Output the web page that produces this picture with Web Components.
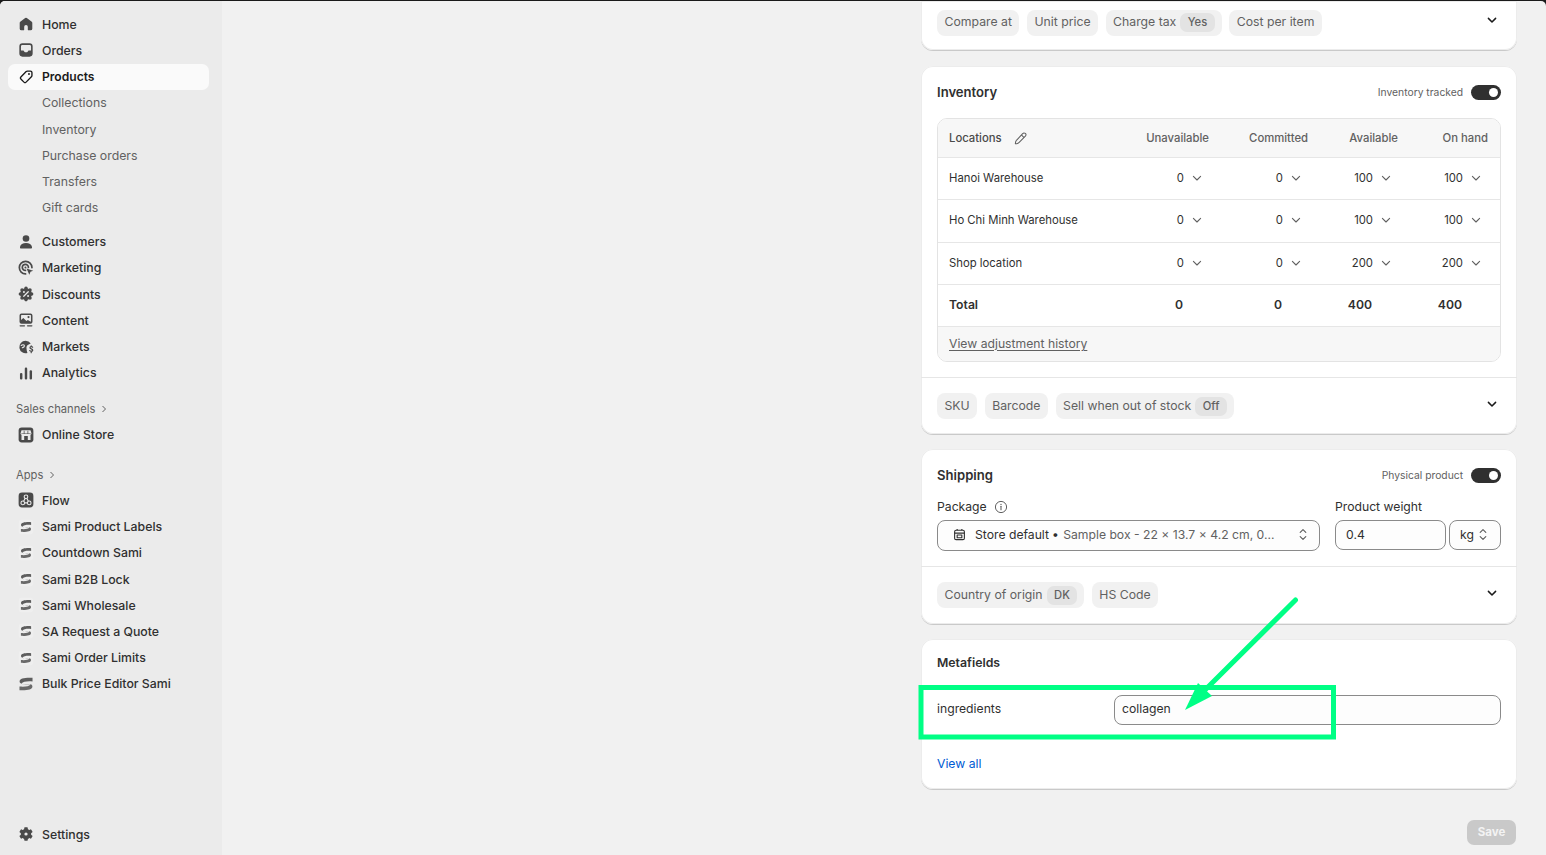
<!DOCTYPE html>
<html lang="en"><head><meta charset="utf-8"><title>Product</title>
<style>
html,body{margin:0;padding:0;height:100%;overflow:hidden;background:#1a1a1a}
body{font-family:Inter,"Liberation Sans",sans-serif;font-size:12.2px;color:#303030;-webkit-font-smoothing:antialiased}
</style></head><body>
<app-shell>
<side-nav slot="nav">
  <nav-item icon="home">Home</nav-item>
  <nav-item icon="orders">Orders</nav-item>
  <nav-item icon="tag" active>Products</nav-item>
  <nav-item sub>Collections</nav-item>
  <nav-item sub>Inventory</nav-item>
  <nav-item sub>Purchase orders</nav-item>
  <nav-item sub>Transfers</nav-item>
  <nav-item sub>Gift cards</nav-item>
  <nav-group>
    <nav-item icon="person">Customers</nav-item>
    <nav-item icon="target">Marketing</nav-item>
    <nav-item icon="discount">Discounts</nav-item>
    <nav-item icon="content">Content</nav-item>
    <nav-item icon="globe">Markets</nav-item>
    <nav-item icon="bars">Analytics</nav-item>
  </nav-group>
  <nav-group>
    <nav-heading>Sales channels</nav-heading>
    <nav-item icon="store">Online Store</nav-item>
  </nav-group>
  <nav-group>
    <nav-heading>Apps</nav-heading>
    <nav-item icon="flow">Flow</nav-item>
    <nav-item icon="sami">Sami Product Labels</nav-item>
    <nav-item icon="sami">Countdown Sami</nav-item>
    <nav-item icon="sami">Sami B2B Lock</nav-item>
    <nav-item icon="sami">Sami Wholesale</nav-item>
    <nav-item icon="sami">SA Request a Quote</nav-item>
    <nav-item icon="sami">Sami Order Limits</nav-item>
    <nav-item icon="samibig">Bulk Price Editor Sami</nav-item>
  </nav-group>
  <nav-item slot="foot" icon="gear">Settings</nav-item>
</side-nav>

<main-col>
  <ui-card cut>
    <chip-row cut>
      <ui-chip>Compare at</ui-chip><ui-chip>Unit price</ui-chip><ui-chip pill="Yes">Charge tax</ui-chip><ui-chip>Cost per item</ui-chip>
    </chip-row>
  </ui-card>

  <ui-card inv>
    <card-head label="Inventory tracked">Inventory</card-head>
    <inv-table>
      <inv-row head name="Locations" cells="Unavailable|Committed|Available|On hand"></inv-row>
      <inv-row name="Hanoi Warehouse" cells="0|0|100|100"></inv-row>
      <inv-row name="Ho Chi Minh Warehouse" cells="0|0|100|100"></inv-row>
      <inv-row name="Shop location" cells="0|0|200|200"></inv-row>
      <inv-row total name="Total" cells="0|0|400|400"></inv-row>
      <inv-foot>View adjustment history</inv-foot>
    </inv-table>
    <chip-row slot="after" divided>
      <ui-chip>SKU</ui-chip><ui-chip>Barcode</ui-chip><ui-chip pill="Off">Sell when out of stock</ui-chip>
    </chip-row>
  </ui-card>

  <ui-card ship>
    <card-head label="Physical product">Shipping</card-head>
    <ship-form></ship-form>
    <chip-row slot="after" divided ship>
      <ui-chip pill="DK">Country of origin</ui-chip><ui-chip>HS Code</ui-chip>
    </chip-row>
  </ui-card>

  <ui-card meta>
    <meta-fields></meta-fields>
  </ui-card>

  <save-bar></save-bar>
</main-col>
<note-overlay slot="overlay"></note-overlay>
</app-shell>

<script>
const tpl = (html) => { const t = document.createElement('template'); t.innerHTML = html; return t; };
class Base extends HTMLElement {
  constructor(){ super(); this.attachShadow({mode:'open'}); const T=this.constructor.template; if(T) this.shadowRoot.appendChild(T.content.cloneNode(true)); }
}
const D='#4a4a4a', L='#ebebeb';
const samiTop = 'M3.800 7.600C3.800 4.400 9 3.700 16.300 4v3.500C11.300 7.100 7.200 7.500 5.600 9.700 4.500 9.300 3.800 8.600 3.800 7.600Z';
const ICONS = {
 home:`<path fill="${D}" d="M9.100 3.300 3.600 7.500A1.600 1.600 0 0 0 3 8.800V15.300A1.800 1.800 0 0 0 4.800 17H7.400a.6.6 0 0 0 .6-.6V13a2 2 0 0 1 4 0v3.400a.6.6 0 0 0 .6.6h2.600a1.800 1.800 0 0 0 1.800-1.700V8.800a1.600 1.600 0 0 0-.6-1.300l-5.500-4.200a1.500 1.500 0 0 0-1.800 0Z"/>`,
 orders:`<path fill="${D}" fill-rule="evenodd" d="M6 2.600h8A3.400 3.400 0 0 1 17.400 6v8a3.400 3.400 0 0 1-3.400 3.400H6A3.400 3.400 0 0 1 2.600 14V6A3.400 3.400 0 0 1 6 2.600ZM6 4.400A1.600 1.600 0 0 0 4.400 6v4.600h2.400c.7 0 1 .4 1.200 1 .1.500.5.9 1 .9h2c.5 0 .9-.4 1-.9.2-.6.5-1 1.200-1h2.400V6A1.600 1.600 0 0 0 14 4.400Z"/>`,
 tag:`<path fill="none" stroke="#1a1a1a" stroke-width="1.500" stroke-linejoin="round" d="M11.600 3.400h3.300a1.700 1.700 0 0 1 1.700 1.700v3.300a2 2 0 0 1-.6 1.400l-5.900 5.900a1.700 1.700 0 0 1-2.400 0l-3.400-3.400a1.700 1.700 0 0 1 0-2.400l5.900-5.900a2 2 0 0 1 1.400-.6Z"/><circle cx="13.300" cy="6.700" r="1.050" fill="#1a1a1a"/>`,
 person:`<circle cx="10" cy="6.100" r="3.700" fill="${D}"/><path fill="${D}" d="M3.300 15.500C3.800 12.700 6.500 11 10 11s6.200 1.700 6.700 4.500c.2 1-.5 1.800-1.400 1.800H4.700c-.9 0-1.600-.8-1.400-1.800Z"/>`,
 target:`<g fill="none" stroke="${D}" stroke-width="1.900" stroke-linecap="round"><path d="M9.500 16.600a7 7 0 1 1 7.100-7.100"/><path d="M9.400 12.700a3.400 3.400 0 1 1 3.300-3.300"/></g><circle cx="9.400" cy="9.400" r="1.100" fill="${D}"/><path fill="${D}" d="M10.600 10.600 18 13l-3 1.300-1.300 3.200Z"/>`,
 discount:`<g fill="${D}"><circle cx="10" cy="10" r="6.500"/><circle cx="10" cy="3.800" r="2"/><circle cx="10" cy="16.200" r="2"/><circle cx="3.800" cy="10" r="2"/><circle cx="16.200" cy="10" r="2"/><circle cx="5.600" cy="5.600" r="2"/><circle cx="14.400" cy="5.600" r="2"/><circle cx="5.600" cy="14.400" r="2"/><circle cx="14.400" cy="14.400" r="2"/></g><path stroke="${L}" stroke-width="1.400" stroke-linecap="round" d="M7.500 12.500l5-5"/><circle cx="7.700" cy="7.700" r="1.100" fill="${L}"/><circle cx="12.300" cy="12.300" r="1.100" fill="${L}"/>`,
 content:`<path fill="${D}" fill-rule="evenodd" d="M5 2.800h10a2.200 2.200 0 0 1 2.200 2.200v7A2.200 2.200 0 0 1 15 14.200H5A2.200 2.200 0 0 1 2.800 12V5A2.200 2.200 0 0 1 5 2.800Zm0 1.700a.5.5 0 0 0-.5.5v5L7 7.800l3.500 3.400 1.500-1.200 3.500 2V5a.5.5 0 0 0-.5-.5Z"/><circle cx="12.800" cy="6.800" r="1.200" fill="${D}"/><rect x="2.800" y="15.700" width="6.200" height="1.600" rx=".8" fill="${D}"/><rect x="11" y="15.700" width="6.200" height="1.600" rx=".8" fill="${D}"/>`,
 globe:`<path fill="${D}" d="M9.500 3a7 7 0 0 1 5.800 3.100l-2.300 1c-1.600.7-2.500 2-2.500 3.700 0 2 .5 3.900 1.100 5.900A7 7 0 1 1 9.500 3Z"/><path fill="none" stroke="${L}" stroke-width="1.300" stroke-linecap="round" d="M4.700 8.300c1.500-1.300 3.500-1 3.500.6 0 1.500-1.400 1.600-2.300 1.900"/><path fill="none" stroke="${D}" stroke-width="1.300" stroke-linecap="round" d="M17.400 10.300c-.5-.9-3-1-3 .5s3.100 1 3.100 2.700c0 1.500-2.800 1.400-3.400.4M15.800 8.600v1M15.800 14.900v1.400"/>`,
 bars:`<g fill="${D}"><rect x="3.300" y="10" width="2.700" height="7.200" rx="1.200"/><rect x="8.650" y="4" width="2.700" height="13.200" rx="1.200"/><rect x="14" y="7" width="2.700" height="10.200" rx="1.200"/></g>`,
 store:`<rect x="1.800" y="1.800" width="16.400" height="16.400" rx="3.500" fill="${D}"/><path fill="${L}" d="M5 4.800h10l1.100 3.400a1.700 1.700 0 0 1-1.100 1.500V15.500H5V9.700a1.700 1.700 0 0 1-1.100-1.500Z"/><path fill="${D}" d="M8 11h4v4.500H8ZM4.800 8.200h10.400v.7H4.800ZM7.500 5.200h.8v3h-.8ZM11.700 5.200h.8v3h-.8Z"/>`,
 flow:`<rect x="1.800" y="1.800" width="16.400" height="16.400" rx="3.800" fill="${D}"/><g fill="none" stroke="${L}" stroke-width="1.200"><circle cx="10" cy="6.400" r="2"/><circle cx="6.400" cy="13.200" r="2"/><circle cx="13.600" cy="13.200" r="2"/><path d="M9.100 8.200 7.300 11.400M10.900 8.200l1.800 3.200M8.400 13.200h3.200"/></g>`,
 sami:`<rect x="2" y="2" width="16" height="16" rx="3" fill="#efefef"/><g transform="translate(1 1) scale(.9)"><path fill="#5e5e5e" d="${samiTop}"/><path fill="#6a6a6a" transform="rotate(180 10 10)" d="${samiTop}"/><path fill="#aaa" d="M5.600 9.700c2.400 1 6.500.5 8.800.6-2.400 1-6.500.5-8.800-.6Z"/></g>`,
 samibig:`<g transform="translate(-1.500 -1.500) scale(1.150)"><path fill="#5e5e5e" d="${samiTop}"/><path fill="#6a6a6a" transform="rotate(180 10 10)" d="${samiTop}"/><path fill="#aaa" d="M5.600 9.700c2.400 1 6.500.5 8.800.6-2.400 1-6.500.5-8.800-.6Z"/></g>`,
 gear:`<g fill="${D}"><circle cx="10" cy="10" r="5.800"/><rect x="8" y="2.500" width="4" height="3.200" rx=".8"/><rect x="8" y="14.300" width="4" height="3.200" rx=".8"/><rect x="8" y="2.500" width="4" height="3.200" rx=".8" transform="rotate(60 10 10)"/><rect x="8" y="14.300" width="4" height="3.200" rx=".8" transform="rotate(60 10 10)"/><rect x="8" y="2.500" width="4" height="3.200" rx=".8" transform="rotate(120 10 10)"/><rect x="8" y="14.300" width="4" height="3.200" rx=".8" transform="rotate(120 10 10)"/></g><circle cx="10" cy="10" r="1.800" fill="${L}"/>`
};
const chev = (c='#616161',s=1.4)=>`<svg viewBox="0 0 12 12" width="12" height="12" aria-hidden="true"><path d="M2.400 4.400 6 8l3.600-3.600" fill="none" stroke="${c}" stroke-width="${s}" stroke-linecap="round" stroke-linejoin="round"/></svg>`;
const updown = `<svg viewBox="0 0 10 16" width="10" height="15" aria-hidden="true"><path d="M2 5.800 5 2.800l3 3M2 10.200l3 3 3-3" fill="none" stroke="#5c5c5c" stroke-width="1.200" stroke-linecap="round" stroke-linejoin="round"/></svg>`;

class AppShell extends Base { static template = tpl(`<style>
  :host{display:flex;height:854px;margin-top:1px;background:#f1f1f1;border-radius:5px 5px 0 0;overflow:hidden;position:relative}
  ::slotted([slot=nav]){flex:none}
  .main{flex:1;min-width:0;display:flex}
  </style><slot name="nav"></slot><div class="main"><slot></slot></div><slot name="overlay"></slot>`); }

class SideNav extends Base { static template = tpl(`<style>
  :host{display:flex;flex-direction:column;width:222px;height:100%;box-sizing:border-box;background:#ebebeb;padding:10.200px 13px 7.500px 8px}
  .list{flex:1;display:flex;flex-direction:column}
  </style><div class="list"><slot></slot></div><slot name="foot"></slot>`); }

class NavGroup extends Base { static template = tpl(`<style>
  :host{display:flex;flex-direction:column;margin-top:8px}
  :host(:nth-of-type(2)){margin-top:9.500px}
  :host(:nth-of-type(3)){margin-top:13.500px}
  </style><slot></slot>`); }

class NavHeading extends Base { static template = tpl(`<style>
  :host{display:flex;align-items:center;height:26.200px;box-sizing:border-box;padding:1.500px 0 0 8px;font-size:11.200px;color:#616161;font-weight:400;gap:6px}
  svg{width:6px;height:8px}
  </style><slot></slot><svg viewBox="0 0 6 8"><path d="M1.500 1 4.500 4l-3 3" fill="none" stroke="#616161" stroke-width="1"/></svg>`); }

class NavItem extends Base { static template = tpl(`<style>
  :host{display:flex;align-items:center;height:26.200px;box-sizing:border-box;border-radius:7px;padding-left:8.500px;gap:7.500px;font-weight:450;font-size:12.300px;color:#303030}
  :host([active]){background:#fafafa;color:#1a1a1a;font-weight:600;font-size:12.100px}
  :host([sub]){padding-left:34px;color:#616161;font-weight:400}
  svg{width:18px;height:18px;flex:none}
  </style><span id="ic" style="display:contents"></span><span><slot></slot></span>`);
  connectedCallback(){ const n=this.getAttribute('icon'); if(n) this.shadowRoot.getElementById('ic').innerHTML=`<svg viewBox="0 0 20 20" aria-hidden="true">${ICONS[n]}</svg>`; }
}

class MainCol extends Base { static template = tpl(`<style>
  :host{display:flex;flex-direction:column;align-items:flex-end;flex:1;padding-right:29px;box-sizing:border-box;height:100%}
  ::slotted(ui-card){width:596px;flex:none}
  </style><slot></slot>`); }

class UiCard extends Base { static template = tpl(`<style>
  :host{display:block;box-sizing:border-box;background:#fff;border-radius:12px;box-shadow:0 1px 0 #c9c9c9,inset 0 0 0 1px #ececec;margin-top:15px}
  :host([cut]){margin-top:0;border-radius:0 0 12px 12px}
  :host([inv]){margin-top:15.500px}
  .p{padding:16px 16px 15px}
  :host([inv]) .p{padding-top:16.500px}
  :host([cut]) .p,:host([meta]) .p{padding:0}
  :host([ship]) .p{padding:16px 16px 0}
  </style><div class="p"><slot></slot></div><slot name="after"></slot>`); }

class ChipRow extends Base { static template = tpl(`<style>
  :host{display:flex;position:relative;gap:7.500px;padding:15px 16px;box-sizing:border-box;align-items:flex-start}
  :host([divided]){border-top:1px solid #e6e6e6}
  :host([ship]){padding-bottom:16px}
  :host([cut]){padding:9px 16px 14px;--nudge:3px}
  .c{position:absolute;right:19px;bottom:24px;width:12px;height:12px;line-height:0}
  :host([ship]) .c{bottom:25px}
  </style><slot></slot><span class="c">${chev('#1a1a1a',1.500)}</span>`); }

class UiChip extends Base { static template = tpl(`<style>
  :host{display:inline-flex;align-items:center;height:26px;box-sizing:border-box;background:#f1f1f1;border-radius:8px;padding:0 7.500px var(--nudge,1px);font-size:12.250px;color:#616161;font-weight:400;gap:4px;white-space:nowrap}
  .pill{display:none;position:relative;top:1px;background:#e3e3e3;border-radius:7px;padding:0 7.500px;height:19px;line-height:18px;font-size:11.200px;font-weight:500;margin-right:-.5px}
  </style><slot></slot><span class="pill" id="p"></span>`);
  connectedCallback(){ const v=this.getAttribute('pill'); if(v){const p=this.shadowRoot.getElementById('p');p.textContent=v;p.style.display='inline-block';} }
}

class ToggleSwitch extends Base { static template = tpl(`<style>
  :host{display:inline-flex;width:30px;height:15px;background:#303030;border-radius:8px;align-items:center;justify-content:flex-end;padding-right:3px;box-sizing:border-box}
  i{display:block;width:9px;height:9px;border-radius:50%;background:#fff}
  </style><i></i>`); }

class CardHead extends Base { static template = tpl(`<style>
  :host{display:flex;align-items:center;justify-content:space-between;height:20px}
  .t{font-size:13.100px;font-weight:600;color:#303030}
  .r{display:flex;align-items:center;gap:8px;font-size:10.300px;color:#616161;font-weight:400}
  </style><span class="t"><slot></slot></span><span class="r"><span id="l"></span><toggle-switch></toggle-switch></span>`);
  connectedCallback(){ this.shadowRoot.getElementById('l').textContent=this.getAttribute('label'); }
}

class InvTable extends Base { static template = tpl(`<style>
  :host{display:block;margin-top:16px;border:1px solid #e3e3e3;border-radius:10px;overflow:hidden;background:#fff}
  </style><slot></slot>`); }

class InvRow extends Base { static template = tpl(`<style>
  :host{display:grid;grid-template-columns:1fr 99px 99px 90px 90px;align-items:center;height:42.300px;padding:0 12px 1px 11px;box-sizing:border-box;border-top:1px solid #e6e6e6;font-size:11.300px;color:#303030;font-weight:400}
  :host([head]){height:38px;padding-bottom:0;border-top:0;background:#f7f7f7;font-weight:500;color:#616161}
  :host([head]) .n{color:#4a4a4a}
  :host([total]){font-weight:600;font-size:12.200px;padding-bottom:2px}
  .n{display:flex;align-items:center;gap:11px}
  .v{display:flex;justify-content:flex-end;align-items:center;padding-right:6px;gap:7px}
  .h{text-align:right;white-space:nowrap}
  .tv{text-align:right;padding-right:26px}
  svg{display:block}
  </style><span class="n" id="n"></span>`);
  connectedCallback(){
    const s=this.shadowRoot, n=s.getElementById('n');
    n.textContent=this.getAttribute('name');
    const head=this.hasAttribute('head'), total=this.hasAttribute('total');
    if(head){ n.insertAdjacentHTML('beforeend',`<svg viewBox="0 0 16 16" width="15" height="15" aria-hidden="true"><path d="M10.300 2.700a2 2 0 0 1 2.900 2.800l-6.900 7c-.6.600-1.400.9-2.300 1l-1.500.2.200-1.500c.1-.9.400-1.700 1-2.300l6.600-7.200ZM9 4.200l2.800 2.800" fill="none" stroke="#616161" stroke-width="1.100" stroke-linejoin="round" stroke-linecap="round"/></svg>`); }
    for(const c of this.getAttribute('cells').split('|')){
      const e=document.createElement('span');
      if(head){e.className='h';e.textContent=c;}
      else if(total){e.className='tv';e.textContent=c;}
      else {e.className='v';e.innerHTML=`<span>${c}</span>${chev('#616161',1.100)}`;}
      s.appendChild(e);
    }
  }
}

class InvFoot extends Base { static template = tpl(`<style>
  :host{display:flex;align-items:center;height:35px;padding:0 11px 2px;box-sizing:border-box;border-top:1px solid #e6e6e6;background:#f7f7f7;font-size:12.200px;color:#616161;font-weight:400;text-decoration:underline;text-underline-offset:2px}
  </style><slot></slot>`); }

class TextBox extends Base { static template = tpl(`<style>
  :host{display:flex;align-items:center;box-sizing:border-box;border:1px solid #8a8a8a;border-radius:8px;background:#fdfdfd;height:30px;font-size:12.200px;color:#303030;font-weight:400;white-space:nowrap;overflow:hidden}
  </style><slot></slot>`); }

class ShipForm extends Base { static template = tpl(`<style>
  :host{display:flex;gap:15px;margin-top:14px;padding-bottom:15px;font-size:12.200px;color:#303030;font-weight:400}
  .f{display:flex;flex-direction:column;gap:6px}
  .pk{flex:1;min-width:0}
  .w{width:166px;flex:none}
  label{display:flex;align-items:center;height:15px;gap:7px}
  .sel{height:31px;padding:0 11.500px 2px 14px;gap:8px}
  .sel .tx{flex:1;overflow:hidden;white-space:nowrap}
  .sel .g{color:#616161;margin-left:1.500px}
  .row{display:flex;gap:3.500px}
  .num{flex:1;height:30px;padding:0 0 1px 10px}
  .kg{width:52px;height:30px;padding:0 0 1px 10px;gap:4px;flex:none}
  svg{display:block;flex:none}
  </style>
  <div class="f pk"><label>Package <svg viewBox="0 0 14 14" width="14" height="14" aria-hidden="true"><circle cx="7" cy="7" r="5.600" fill="none" stroke="#616161" stroke-width="1"/><path d="M7 6.300v3.500" stroke="#616161" stroke-width="1.100" stroke-linecap="round"/><circle cx="7" cy="4.400" r=".7" fill="#616161"/></svg></label>
    <text-box class="sel"><svg viewBox="0 0 16 16" width="15" height="15" aria-hidden="true"><g fill="none" stroke="#303030" stroke-width="1.200" stroke-linejoin="round"><rect x="2.800" y="3.500" width="10.400" height="10" rx="1.500"/><path d="M2.800 6.500h10.400M5.500 3.500V2M10.500 3.500V2"/><rect x="5.500" y="8.500" width="5" height="3"/></g></svg><span class="tx">Store default <b style="font-weight:700">•</b> <span class="g">Sample box - 22 × 13.7 × 4.2 cm, 0...</span></span>${updown}</text-box></div>
  <div class="f w"><label>Product weight</label>
    <div class="row"><text-box class="num">0.4</text-box><text-box class="kg">kg ${updown}</text-box></div></div>`); }

class MetaFields extends Base { static template = tpl(`<style>
  :host{display:block;padding:16px 16px 15px;font-size:12.200px;font-weight:400}
  .t{font-size:12.300px;font-weight:600;line-height:16px;height:16px;margin-bottom:24px;color:#303030}
  .r{display:grid;grid-template-columns:177px 1fr;align-items:start}
  .l{line-height:28px}
  .i{height:30px;padding:0 0 3px 7px}
  a{display:block;margin-top:31px;color:#005bd3;line-height:16px;height:18px}
  </style><div class="t">Metafields</div><div class="r"><span class="l">ingredients</span><text-box class="i">collagen</text-box></div><a>View all</a>`); }

class SaveBar extends Base { static template = tpl(`<style>
  :host{display:flex;justify-content:flex-end;margin:31px 1px 0 0}
  span{display:flex;align-items:center;justify-content:center;width:49px;height:25px;padding-bottom:2px;box-sizing:border-box;border-radius:7px;background:#c9c9c9;color:#f3f3f3;font-size:11.500px;font-weight:700}
  </style><span>Save</span>`); }

class NoteOverlay extends Base { static template = tpl(`<style>
  :host{position:absolute;left:0;top:-1px;width:1546px;height:855px;pointer-events:none}
  svg{display:block}
  </style><svg width="1546" height="855" viewBox="0 0 1546 855" aria-hidden="true">
  <rect x="921" y="687.500" width="412.500" height="49.500" fill="none" stroke="#00ff85" stroke-width="5"/>
  <path d="M1295.500 600 1205 690" stroke="#00ff85" stroke-width="5" stroke-linecap="round"/>
  <path d="M1185 710 1198 683 1212 696Z" fill="#00ff85"/></svg>`); }

const defs = {'app-shell':AppShell,'side-nav':SideNav,'nav-group':NavGroup,'nav-heading':NavHeading,'nav-item':NavItem,'main-col':MainCol,'ui-card':UiCard,'chip-row':ChipRow,'ui-chip':UiChip,'toggle-switch':ToggleSwitch,'card-head':CardHead,'inv-table':InvTable,'inv-row':InvRow,'inv-foot':InvFoot,'text-box':TextBox,'ship-form':ShipForm,'meta-fields':MetaFields,'save-bar':SaveBar,'note-overlay':NoteOverlay};
for (const [k,v] of Object.entries(defs)) customElements.define(k,v);
</script>
</body></html>
